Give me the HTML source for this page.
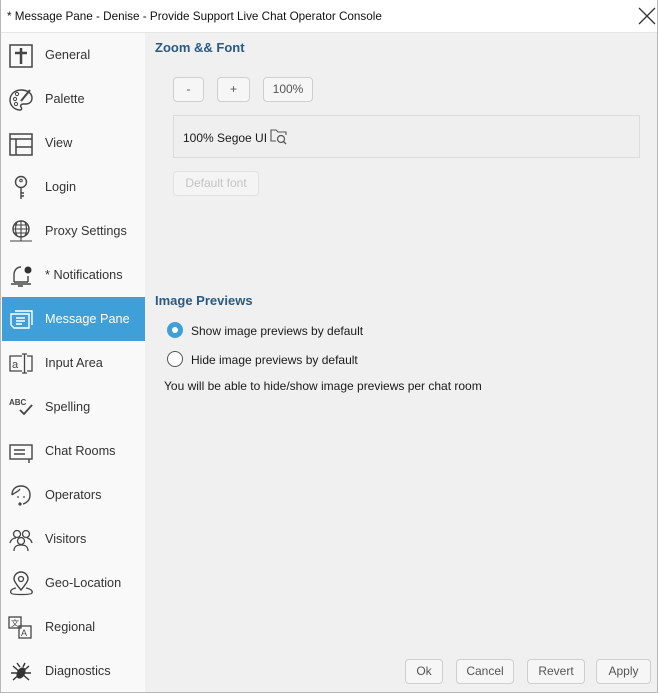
<!DOCTYPE html>
<html><head><meta charset="utf-8"><style>
*{margin:0;padding:0;box-sizing:border-box}
body{width:658px;height:693px;overflow:hidden;background:#fff;font-family:"Liberation Sans",sans-serif;font-size:12px;color:#1a1a1a;position:relative}
.win{position:absolute;left:0;top:0;width:658px;height:693px;border:1px solid #b8b8b8;border-top:none}
.title{position:absolute;left:0;top:0;width:658px;height:33px;background:#fff;border-bottom:1px solid #e6e6e6}
.title span{position:absolute;left:7px;top:10px;font-size:11.7px;color:#111}
.close{position:absolute;left:638px;top:7px}
.side{position:absolute;left:1px;top:33px;width:144px;height:659px;background:#f9f9f9}
.item{position:absolute;left:1px;width:143px;height:44px}
.item .lbl{position:absolute;left:43px;top:15px;font-size:12.7px;color:#333}
.item svg{position:absolute;left:6px;top:10px}
.sel{background:#3f9fd9}
.sel .lbl{color:#fff}
.content{position:absolute;left:145px;top:33px;width:512px;height:659px;background:#f0f0f0}
h3{position:absolute;font-size:13px;font-weight:bold;color:#2a5a82}
.btn{position:absolute;height:25px;border:1px solid #cfcfcf;border-radius:4px;background:#f6f6f6;font-size:12px;color:#555;text-align:center;line-height:23px}
.fontbox{position:absolute;left:28px;top:82px;width:467px;height:43px;border:1px solid #dcdcdc;background:#efefef}
.radio{position:absolute;width:16px;height:16px;border-radius:50%}
.t{position:absolute;font-size:12px;color:#1a1a1a}
</style></head><body>
<div class="title"><span>* Message Pane - Denise - Provide Support Live Chat Operator Console</span>
<svg class="close" width="18" height="18" viewBox="0 0 18 18"><path d="M1 1L17 17M17 1L1 17" stroke="#333" stroke-width="1.3"/></svg></div>
<div class="side">
<div class="item" style="top:0"><svg width="26" height="26" viewBox="0 0 26 26"><rect x="2" y="2" width="22" height="22" fill="none" stroke="#444" stroke-width="1.5"/><path d="M13 5V21M7 10H19" stroke="#444" stroke-width="2.5"/></svg><span class="lbl">General</span></div>
<div class="item" style="top:44px"><svg width="26" height="26" viewBox="0 0 26 26"><path d="M13 3C6 3 2 8 2 13c0 6 5 10 10 10 2 0 2-2 1-3s0-3 2-3h3c3 0 6-2 6-6 0-5-5-8-11-8z" fill="none" stroke="#444" stroke-width="1.4"/><circle cx="7" cy="12" r="1.6" fill="none" stroke="#444"/><circle cx="9" cy="7" r="1.6" fill="none" stroke="#444"/><circle cx="8" cy="17" r="1.6" fill="none" stroke="#444"/><path d="M22 3L13 14" stroke="#444" stroke-width="2"/></svg><span class="lbl">Palette</span></div>
<div class="item" style="top:88px"><svg width="26" height="26" viewBox="0 0 26 26"><rect x="2" y="3" width="22" height="21" fill="none" stroke="#444" stroke-width="1.5"/><path d="M2 8H24M8 8V24M8 16H24" stroke="#444" stroke-width="1.5"/></svg><span class="lbl">View</span></div>
<div class="item" style="top:132px"><svg width="26" height="26" viewBox="0 0 26 26"><circle cx="13" cy="7" r="5.5" fill="none" stroke="#444" stroke-width="1.4"/><circle cx="13" cy="5.5" r="1.3" fill="none" stroke="#444"/><path d="M13 12.5V24M13 18H16M13 21H16" stroke="#444" stroke-width="1.4"/></svg><span class="lbl">Login</span></div>
<div class="item" style="top:176px"><svg width="26" height="26" viewBox="0 0 26 26"><circle cx="13" cy="10" r="8" fill="none" stroke="#444" stroke-width="1.4"/><path d="M5 10H21M13 2V18M9 3Q6 10 9 17M17 3Q20 10 17 17M6 6H20M6 14H20M13 18V22M2 22H24" stroke="#444" stroke-width="1.1" fill="none"/></svg><span class="lbl">Proxy Settings</span></div>
<div class="item" style="top:220px"><svg width="26" height="26" viewBox="0 0 26 26"><path d="M6 19V12c0-5 3-8 7-8M6 19H20M3 21H23M10 23H15" stroke="#444" stroke-width="1.4" fill="none"/><path d="M20 13V19" stroke="#444" stroke-width="1.4"/><circle cx="20" cy="7" r="3.5" fill="#333"/></svg><span class="lbl">* Notifications</span></div>
<div class="item sel" style="top:264px"><svg width="26" height="26" viewBox="0 0 26 26"><path d="M3 7H21V21H6L3 18Z" fill="none" stroke="#fff" stroke-width="1.4"/><path d="M7 4H24V18" fill="none" stroke="#fff" stroke-width="1.4"/><path d="M8 11H17M8 14H17M8 17H14" stroke="#fff" stroke-width="1.4"/></svg><span class="lbl">Message Pane</span></div>
<div class="item" style="top:308px"><svg width="26" height="26" viewBox="0 0 26 26"><path d="M14 5H2V20H14M19 5H24V20H19M14 3H19M16.5 3V22M14 22H19" stroke="#444" stroke-width="1.3" fill="none"/><text x="4" y="17" font-size="11" fill="#444" font-family="Liberation Sans">a</text></svg><span class="lbl">Input Area</span></div>
<div class="item" style="top:352px"><svg width="26" height="26" viewBox="0 0 26 26"><text x="1" y="10" font-size="8" fill="#444" font-weight="bold" font-family="Liberation Sans">ABC</text><path d="M12 15L16 19L24 10" stroke="#444" stroke-width="1.8" fill="none"/></svg><span class="lbl">Spelling</span></div>
<div class="item" style="top:396px"><svg width="26" height="26" viewBox="0 0 26 26"><rect x="2" y="6" width="22" height="14" fill="none" stroke="#444" stroke-width="1.4"/><path d="M6 11H17M6 15H17M21 20V24" stroke="#444" stroke-width="1.4"/></svg><span class="lbl">Chat Rooms</span></div>
<div class="item" style="top:440px"><svg width="26" height="26" viewBox="0 0 26 26"><path d="M4 12C4 6 8 3 13 3s9 3 9 9-4 8-7 9" fill="none" stroke="#444" stroke-width="1.4"/><path d="M4 12C6 10 10 9 12 6" fill="none" stroke="#444" stroke-width="1.3"/><circle cx="10" cy="14" r="0.9" fill="#444"/><circle cx="16" cy="14" r="0.9" fill="#444"/><circle cx="12" cy="21" r="1.6" fill="#444"/></svg><span class="lbl">Operators</span></div>
<div class="item" style="top:484px"><svg width="26" height="26" viewBox="0 0 26 26"><circle cx="9" cy="7" r="3.5" fill="none" stroke="#444" stroke-width="1.3"/><circle cx="18" cy="7" r="3.5" fill="none" stroke="#444" stroke-width="1.3"/><circle cx="13" cy="14" r="3.5" fill="none" stroke="#444" stroke-width="1.3"/><path d="M2 16C3 12 6 11 8 11M24 16C23 12 20 11 19 11M6 24C6 19 9 18 13 18s7 1 7 6" fill="none" stroke="#444" stroke-width="1.3"/></svg><span class="lbl">Visitors</span></div>
<div class="item" style="top:528px"><svg width="26" height="26" viewBox="0 0 26 26"><path d="M13 19C8 13 6 10 6 8a7 7 0 0 1 14 0c0 2-2 5-7 11z" fill="none" stroke="#444" stroke-width="1.4"/><circle cx="13" cy="8" r="2.5" fill="none" stroke="#444" stroke-width="1.3"/><path d="M8 17C3 18 2 20 3 22s20 2 21 0-1-4-6-5" fill="none" stroke="#444" stroke-width="1.3"/></svg><span class="lbl">Geo-Location</span></div>
<div class="item" style="top:572px"><svg width="26" height="26" viewBox="0 0 26 26"><rect x="1" y="2" width="12" height="11" fill="none" stroke="#444" stroke-width="1.3"/><rect x="11" y="11" width="12" height="12" fill="none" stroke="#444" stroke-width="1.3"/><text x="3" y="11" font-size="8" fill="#444">文</text><text x="13" y="21" font-size="9" fill="#444" font-family="Liberation Sans">A</text></svg><span class="lbl">Regional</span></div>
<div class="item" style="top:616px"><svg width="26" height="26" viewBox="0 0 26 26"><ellipse cx="13" cy="14" rx="4" ry="6" fill="#333" transform="rotate(30 13 14)"/><path d="M3 14H23M5 7L21 21M5 21L21 7M9 4L12 8M17 4L15 8" stroke="#333" stroke-width="1.4"/></svg><span class="lbl">Diagnostics</span></div>
</div>
<div class="content">
<h3 style="left:10px;top:7px">Zoom &amp;&amp; Font</h3>
<div class="btn" style="left:28px;top:44px;width:31px">-</div>
<div class="btn" style="left:72px;top:44px;width:33px">+</div>
<div class="btn" style="left:118px;top:44px;width:50px">100%</div>
<div class="fontbox"><span class="t" style="left:9px;top:15px">100% Segoe UI</span>
<svg style="position:absolute;left:96px;top:12px" width="18" height="18" viewBox="0 0 18 18"><path d="M6 13H1V2H6L8 4H16V7" fill="none" stroke="#555" stroke-width="1.1"/><circle cx="11" cy="11" r="3.5" fill="none" stroke="#555" stroke-width="1.2"/><path d="M13.5 13.5L16 16" stroke="#555" stroke-width="1.3"/></svg></div>
<div class="btn" style="left:28px;top:138px;width:86px;color:#c4c4c4;border-color:#e2e2e2;background:#f4f4f4">Default font</div>
<h3 style="left:10px;top:260px">Image Previews</h3>
<div class="radio" style="left:22px;top:289px;background:#3f9fd9"><div style="position:absolute;left:5px;top:5px;width:6px;height:6px;border-radius:50%;background:#fff"></div></div>
<span class="t" style="left:46px;top:291px">Show image previews by default</span>
<div class="radio" style="left:22px;top:318px;border:1px solid #555;background:#fff"></div>
<span class="t" style="left:46px;top:320px">Hide image previews by default</span>
<span class="t" style="left:19px;top:346px">You will be able to hide/show image previews per chat room</span>
<div class="btn" style="left:260px;top:626px;width:38px">Ok</div>
<div class="btn" style="left:311px;top:626px;width:58px">Cancel</div>
<div class="btn" style="left:382px;top:626px;width:58px">Revert</div>
<div class="btn" style="left:451px;top:626px;width:55px">Apply</div>
</div>
<div class="win"></div>
</body></html>
